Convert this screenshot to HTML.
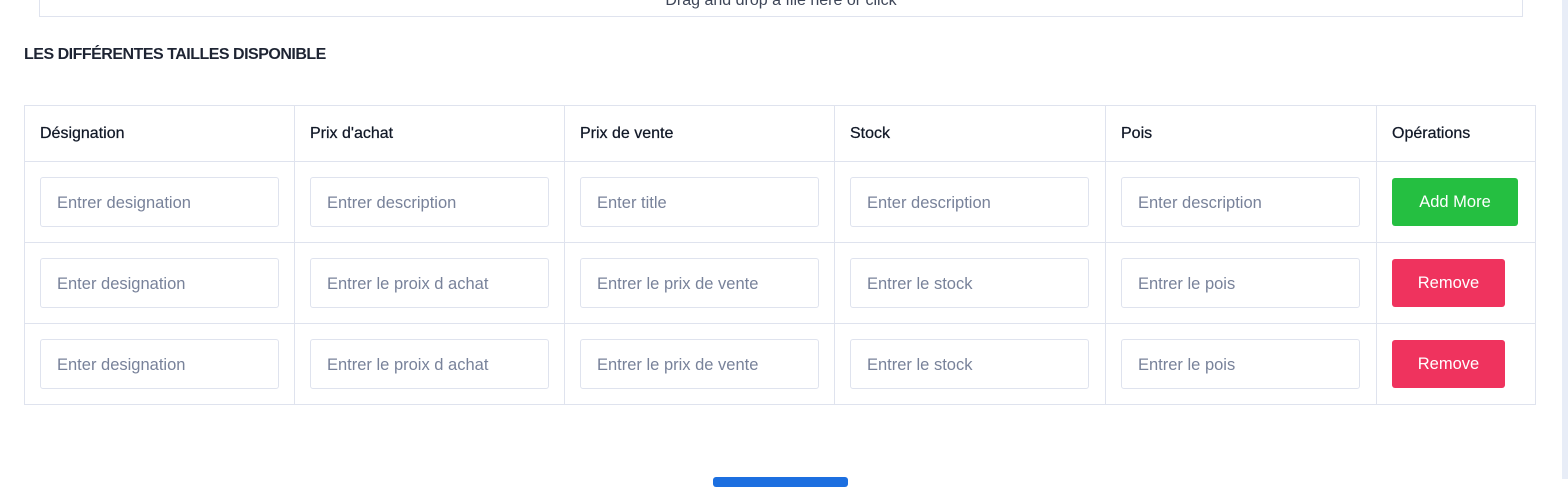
<!DOCTYPE html>
<html><head><meta charset="utf-8"><style>
*{box-sizing:border-box;margin:0;padding:0}
body{width:1568px;height:479px;overflow:hidden;background:#fff;font-family:"Liberation Sans",Arial,sans-serif;position:relative}
.drop{position:absolute;left:39px;top:-40px;width:1484px;height:57px;border:1px solid #dfe3ee;border-top:none}
.drop span{position:absolute;left:0;right:0;bottom:6px;text-align:center;font-size:16px;color:#3e4658}
.sb{position:absolute;left:1562px;top:0;width:6px;height:479px;background:#e8edf7}
h5{position:absolute;left:24px;top:46px;font-size:16px;font-weight:bold;color:#1e2433;letter-spacing:-0.5px}
table{position:absolute;left:24px;top:105px;border-collapse:collapse;width:1512px}
td,th{border:1px solid #dfe3ee;padding:0 15px;text-align:left;vertical-align:middle}
th{height:56px;font-size:16px;font-weight:normal;color:#111827;-webkit-text-stroke:0.25px #111827}
td{height:81px}
.in{width:239px;height:50px;border:1px solid #dfe3ee;border-radius:3px;font-size:16.5px;color:#78829a;padding:0 16px;line-height:50px;white-space:nowrap}
.btn{display:inline-block;height:48px;line-height:48px;color:#fff;font-size:16.5px;border-radius:3px;text-align:center}
.g{background:#25bf41;width:126px}
.r{background:#ef335e;width:113px}
.blue{position:absolute;left:713px;top:477px;width:135px;height:10px;background:#1c6fe0;border-radius:3px}
</style></head><body>
<div class="drop"><span>Drag and drop a file here or click</span></div>
<div class="sb"></div>
<h5>LES DIFFÉRENTES TAILLES DISPONIBLE</h5>
<table>
<tr><th style="width:270px">Désignation</th><th style="width:270px">Prix d'achat</th><th style="width:270px">Prix de vente</th><th style="width:271px">Stock</th><th style="width:271px">Pois</th><th>Opérations</th></tr>
<tr><td><div class="in">Entrer designation</div></td><td><div class="in">Entrer description</div></td><td><div class="in">Enter title</div></td><td><div class="in">Enter description</div></td><td><div class="in">Enter description</div></td><td><span class="btn g">Add More</span></td></tr>
<tr><td><div class="in">Enter designation</div></td><td><div class="in">Entrer le proix d achat</div></td><td><div class="in">Entrer le prix de vente</div></td><td><div class="in">Entrer le stock</div></td><td><div class="in">Entrer le pois</div></td><td><span class="btn r">Remove</span></td></tr>
<tr><td><div class="in">Enter designation</div></td><td><div class="in">Entrer le proix d achat</div></td><td><div class="in">Entrer le prix de vente</div></td><td><div class="in">Entrer le stock</div></td><td><div class="in">Entrer le pois</div></td><td><span class="btn r">Remove</span></td></tr>
</table>
<div class="blue"></div>
</body></html>
